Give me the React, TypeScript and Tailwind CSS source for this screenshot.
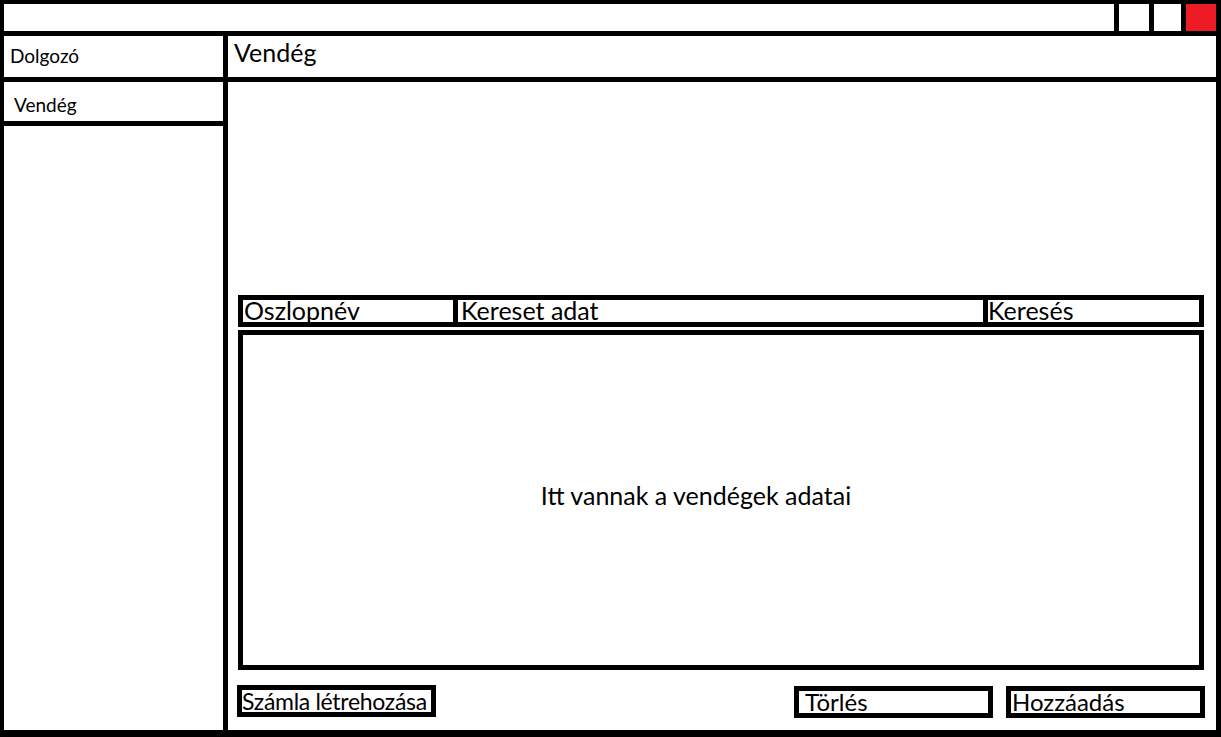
import React from 'react';

// Wireframe of the "Vendég" screen: sidebar menu, search row, data table, actions
const WindowControls = () => (
  <div className="flex h-full">
    <div className="w-[35px] h-full border-l-[5px] border-black bg-white" />
    <div className="w-[32px] h-full border-l-[5px] border-black bg-white" />
    <div className="w-[35px] h-full border-l-[5px] border-black bg-[#ed1c24]" />
  </div>
);

const Sidebar = () => (
  <aside className="w-[224px] shrink-0 border-r-[5px] border-black flex flex-col">
    <div className="h-[46px] border-b-[5px] border-black pl-[6px] pt-[10px] text-[19px] leading-none">Dolgozó</div>
    <div className="h-[44px] border-b-[5px] border-black pl-[10px] pt-[13px] text-[19px] leading-none">Vendég</div>
  </aside>
);

const SearchBar = () => (
  <div className="h-[32px] border-[5px] border-black flex text-[25px] leading-[21px] overflow-hidden whitespace-nowrap">
    <div className="w-[215px] border-r-[5px] border-black pl-[1px]">Oszlopnév</div>
    <div className="w-[530px] border-r-[5px] border-black pl-[3px]">Kereset adat</div>
    <div className="flex-1">Keresés</div>
  </div>
);

const ActionButton = ({ label, className }: { label: string; className?: string }) => (
  <div className={`w-[199px] h-[32px] border-[5px] border-black leading-[22px] whitespace-nowrap overflow-hidden ${className ?? ''}`}>
    {label}
  </div>
);

export default function App() {
  return (
    <div className="w-[1221px] h-[737px] bg-white text-black flex flex-col border-t-4 border-l-4 border-r-[5px] border-b-[7px] border-black overflow-hidden font-['Lato','Liberation_Sans',sans-serif]">
      {/* title bar */}
      <div className="h-[32px] shrink-0 border-b-[5px] border-black flex justify-end">
        <WindowControls />
      </div>

      <div className="flex flex-1 min-h-0">
        <Sidebar />

        <main className="flex-1 flex flex-col min-w-0">
          <div className="h-[46px] shrink-0 border-b-[5px] border-black pl-[6px] pt-[4px] text-[25px] leading-none">Vendég</div>

          <div className="flex flex-col pl-[10px] pr-[12px] pt-[213px]">
            <SearchBar />

            <div className="mt-[3px] h-[340px] border-[5px] border-black flex items-center justify-center pr-[50px] pb-[8px] text-[25px]">
              Itt vannak a vendégek adatai
            </div>

            <div className="mt-[15px] flex items-start">
              <ActionButton label="Számla létrehozása" className="-ml-[1px] text-[23px] tracking-[-0.3px]" />
              <div className="flex-1" />
              <div className="flex gap-[13px] mt-[1px] -mr-[1px]">
                <ActionButton label="Törlés" className="pl-[6px] text-[24px]" />
                <ActionButton label="Hozzáadás" className="pl-[1px] text-[24px]" />
              </div>
            </div>
          </div>
        </main>
      </div>
    </div>
  );
}
